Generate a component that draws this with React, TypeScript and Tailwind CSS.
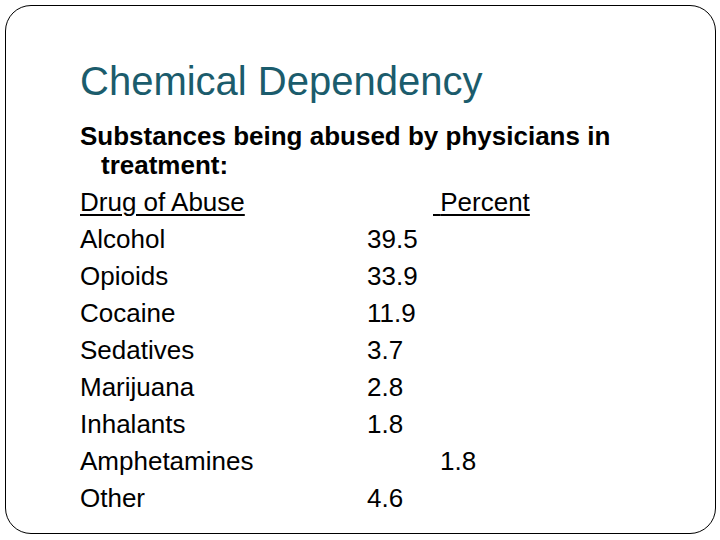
const rows: { name: string; value: string; shifted?: boolean }[] = [
  { name: 'Alcohol', value: '39.5' },
  { name: 'Opioids', value: '33.9' },
  { name: 'Cocaine', value: '11.9' },
  { name: 'Sedatives', value: '3.7' },
  { name: 'Marijuana', value: '2.8' },
  { name: 'Inhalants', value: '1.8' },
  { name: 'Amphetamines', value: '1.8', shifted: true },
  { name: 'Other', value: '4.6' },
];

export default function App() {
  return (
    <main
      className="w-[720px] h-[540px] bg-white overflow-hidden pt-[5px] pl-[5px]"
      style={{ fontFamily: '"Liberation Sans", Arial, sans-serif' }}
    >
      <div className="w-[711px] h-[529px] border border-black rounded-[26px] pl-[74px] pt-[51px]">
        {/* Title */}
        <h1 className="text-[40px] leading-[48px] text-[#1b5c6c]">Chemical Dependency</h1>

        {/* Body */}
        <div className="mt-[17px] w-[580px] text-[26px] leading-[29px] text-black">
          <p className="font-bold pl-[21px] -indent-[21px]">
            Substances being abused by physicians in treatment:
          </p>
          <div className="mt-[8px] flex">
            <span className="w-[287px] underline decoration-2 underline-offset-[3px]">Drug of Abuse</span>
            <span className="ml-[66px] underline decoration-2 underline-offset-[3px]">{'\u00a0'}Percent</span>
          </div>
          {rows.map((r) => (
            <div key={r.name} className="mt-[8px] flex">
              <span className="w-[287px]">{r.name}</span>
              <span className={r.shifted ? 'ml-[73px]' : ''}>{r.value}</span>
            </div>
          ))}
        </div>
      </div>
    </main>
  );
}
